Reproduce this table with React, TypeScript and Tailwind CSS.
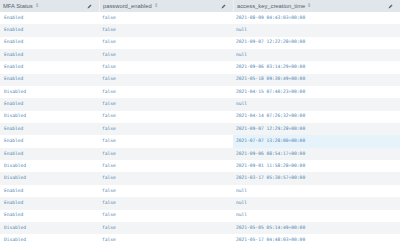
import React from "react";

type Row = { mfa: string; pw: string; created: string; hl?: boolean };

const rows: Row[] = [
  { mfa: "Enabled", pw: "false", created: "2021-08-09 04:43:03+00:00" },
  { mfa: "Enabled", pw: "false", created: "null" },
  { mfa: "Enabled", pw: "false", created: "2021-09-07 12:22:28+00:00" },
  { mfa: "Enabled", pw: "false", created: "null" },
  { mfa: "Enabled", pw: "false", created: "2021-09-06 03:14:29+00:00" },
  { mfa: "Enabled", pw: "false", created: "2021-05-18 09:30:49+00:00" },
  { mfa: "Disabled", pw: "false", created: "2021-04-15 07:40:23+00:00" },
  { mfa: "Enabled", pw: "false", created: "null" },
  { mfa: "Disabled", pw: "false", created: "2021-04-14 07:26:32+00:00" },
  { mfa: "Enabled", pw: "false", created: "2021-09-07 12:29:28+00:00" },
  { mfa: "Enabled", pw: "false", created: "2021-07-07 13:28:00+00:00", hl: true },
  { mfa: "Enabled", pw: "false", created: "2021-09-06 08:54:17+00:00" },
  { mfa: "Disabled", pw: "false", created: "2021-09-01 11:58:28+00:00" },
  { mfa: "Disabled", pw: "false", created: "2021-03-17 05:30:57+00:00" },
  { mfa: "Enabled", pw: "false", created: "null" },
  { mfa: "Enabled", pw: "false", created: "null" },
  { mfa: "Enabled", pw: "false", created: "null" },
  { mfa: "Disabled", pw: "false", created: "2021-05-05 05:14:49+00:00" },
  { mfa: "Disabled", pw: "false", created: "2021-05-17 04:48:03+00:00" },
];

const Pencil = () => (
  <svg width="5" height="5" viewBox="0 0 10 10" className="shrink-0">
    <path d="M1 9 L2 6 L7 1 L9 3 L4 8 Z" fill="#5c6773" />
  </svg>
);

const Sort = () => (
  <span className="ml-[2px] text-[4.5px] leading-none text-[#8a939c]">⇕</span>
);

const HeadCell = ({ label, className }: { label: string; className: string }) => (
  <div className={`flex items-center justify-between pl-[3px] pr-[7px] ${className}`}>
    <span className="flex items-center text-[5.8px] text-[#56606b]">
      {label}
      <Sort />
    </span>
    <Pencil />
  </div>
);

export default function App() {
  return (
    <div className="w-[400px] h-[244px] overflow-hidden bg-white font-['Liberation_Sans',sans-serif]">
      <div className="flex h-[12px] bg-[#e1e6eb]">
        <HeadCell label="MFA Status" className="w-[99px]" />
        <HeadCell label="password_enabled" className="w-[134px] border-l border-[#eef1f3]" />
        <HeadCell label="access_key_creation_time" className="flex-1 border-l border-[#eef1f3]" />
      </div>
      <div className="font-['DejaVu_Sans_Mono',monospace] text-[4.6px] text-[#4f86b3]">
        {rows.map((r, i) => (
          <div
            key={i}
            className={`flex h-[12.35px] items-center ${i % 2 === 1 ? "bg-[#f2f4f5]" : "bg-white"}`}
          >
            <div className="w-[99px] pl-[4px]">{r.mfa}</div>
            <div className="w-[134px] pl-[3px]">{r.pw}</div>
            <div className={`flex h-full flex-1 items-center pl-[3px] ${r.hl ? "bg-[#e6f3fb]" : ""}`}>
              {r.created}
            </div>
          </div>
        ))}
      </div>
    </div>
  );
}
